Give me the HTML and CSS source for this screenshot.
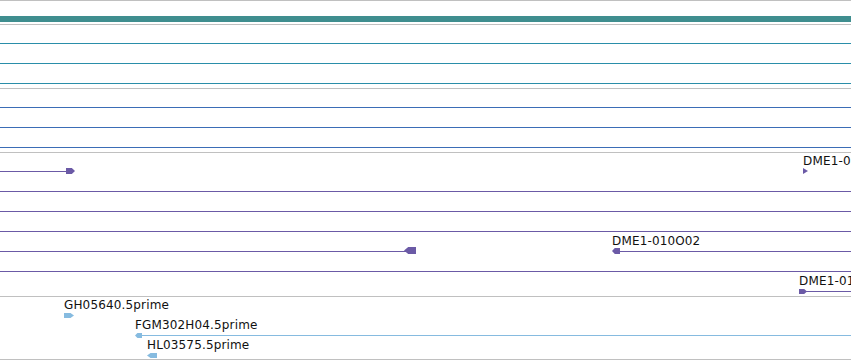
FILE: index.html
```html
<!DOCTYPE html>
<html lang="en">
<head>
    <meta charset="UTF-8">
    <title>Genome view</title>
    <link rel="stylesheet" href="styles.css">
</head>
<body>
    <div class="view">
        <div class="track overview">
            <div class="bar"></div>
        </div>

        <div class="track teal">
            <div class="row full"></div>
            <div class="row full"></div>
            <div class="row full"></div>
        </div>

        <div class="track blue">
            <div class="row full"></div>
            <div class="row full"></div>
            <div class="row full"></div>
        </div>

        <div class="track purple">
            <div class="row">
                <span class="seg" style="left:0;width:66px"></span>
                <span class="head fwd" style="left:66px"></span>
                <span class="label" style="left:803px">DME1-010O01</span>
                <span class="head tri" style="left:803px"></span>
            </div>
            <div class="row full"></div>
            <div class="row full"></div>
            <div class="row full"></div>
            <div class="row">
                <span class="seg" style="left:0;width:406px"></span>
                <span class="head rev big" style="left:404px"></span>
                <span class="label" style="left:612px">DME1-010O02</span>
                <span class="head rev small" style="left:612px"></span>
                <span class="seg" style="left:619px;right:0"></span>
            </div>
            <div class="row full"></div>
            <div class="row">
                <span class="label" style="left:799px">DME1-010O03</span>
                <span class="head fwd flat" style="left:799px"></span>
                <span class="seg" style="left:806px;right:0"></span>
            </div>
        </div>

        <div class="track est">
            <div class="row">
                <span class="label" style="left:64px">GH05640.5prime</span>
                <span class="head fwd est-head" style="left:64px"></span>
            </div>
            <div class="row">
                <span class="label" style="left:135px">FGM302H04.5prime</span>
                <span class="head rev est-small" style="left:135px"></span>
                <span class="seg" style="left:141px;right:0"></span>
            </div>
            <div class="row">
                <span class="label" style="left:147px">HL03575.5prime</span>
                <span class="head rev est-head" style="left:147px"></span>
            </div>
        </div>
    </div>
</body>
</html>
```

FILE: styles.css
```css
body {
    margin: 0;
    background-color: #fff;
    font-family: "DejaVu Sans", sans-serif;
    overflow: hidden;
}
.view {
    width: 851px;
    overflow: hidden;
}
.track {
    border-top: 1px solid #c0c0c0;
    padding-bottom: 3px;
}
.overview {
    padding-top: 15px;
    padding-bottom: 2px;
}
.bar {
    height: 6px;
    background-color: #3f8e8f;
}
.est {
    padding-bottom: 2px;
    border-bottom: 1px solid #c0c0c0;
}
.row {
    position: relative;
    height: 20px;
}
.row.full::after,
.seg {
    content: "";
    position: absolute;
    left: 0;
    right: 0;
    top: 18px;
    height: 1px;
    background-color: currentColor;
}
.teal { color: #2a8ea9; }
.blue { color: #3b6db6; }
.purple { color: #6b5aa6; }
.est { color: #86bbe0; }

.label {
    position: absolute;
    top: 1px;
    font-size: 12px;
    line-height: 14px;
    letter-spacing: 0.15px;
    color: #111;
    white-space: nowrap;
}
.head {
    position: absolute;
    top: 15px;
    width: 9px;
    height: 6px;
    background-color: currentColor;
}
.fwd {
    clip-path: polygon(0 0, 65% 0, 100% 50%, 65% 100%, 0 100%);
}
.rev {
    clip-path: polygon(0 50%, 35% 0, 100% 0, 100% 100%, 35% 100%);
}
.tri {
    width: 5px;
    clip-path: polygon(0 0, 100% 50%, 0 100%);
}
.big {
    top: 14px;
    width: 12px;
    height: 7px;
}
.small {
    width: 8px;
}
.flat {
    top: 16px;
    width: 8px;
    height: 5px;
}
.est-head {
    top: 16px;
    width: 10px;
    height: 5px;
}
.est-small {
    top: 16px;
    width: 7px;
    height: 5px;
}
```
